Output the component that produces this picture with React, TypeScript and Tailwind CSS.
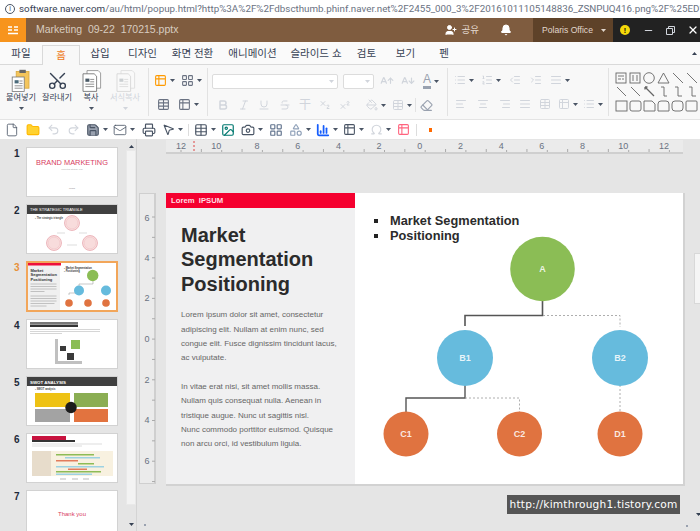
import React from 'react';
import {
  AArrowDown,
  AArrowUp,
  AlignCenter,
  AlignJustify,
  AlignLeft,
  AlignRight,
  BarChart3,
  Bell,
  Bold,
  Camera,
  Eraser,
  File,
  Folder,
  Image,
  IndentDecrease,
  IndentIncrease,
  Italic,
  LayoutGrid,
  List,
  ListOrdered,
  Mail,
  Minus,
  MousePointer2,
  Omega,
  PaintBucket,
  Printer,
  Redo2,
  Save,
  Scissors,
  Shapes,
  Strikethrough,
  Subscript,
  Superscript,
  Table,
  Table2,
  Underline,
  Undo2,
  UserPlus,
  X,
} from 'lucide-react';

const Caret = ({ className = 'text-gray-600' }: { className?: string }) => (
  <svg width="5" height="3" viewBox="0 0 5 3" className={className}>
    <path d="M0 0h5L2.5 3z" fill="currentColor" />
  </svg>
);

const Slot = ({ className, caret, children }: { className: string; caret?: boolean; children?: React.ReactNode }) => (
  <div className={`flex shrink-0 items-center justify-center gap-[3px] ${className}`}>
    {children}
    {caret && <Caret />}
  </div>
);

const tabs = [
  { label: '파일', w: 'w-[42px]' },
  { label: '홈', w: 'w-[38px]', active: true },
  { label: '삽입', w: 'w-[40px]' },
  { label: '디자인', w: 'w-[45px]' },
  { label: '화면 전환', w: 'w-[55px]' },
  { label: '애니메이션', w: 'w-[65px]' },
  { label: '슬라이드 쇼', w: 'w-[62px]' },
  { label: '검토', w: 'w-[39px]' },
  { label: '보기', w: 'w-[39px]' },
  { label: '펜', w: 'w-[38px]' },
];

const PasteIcon = () => (
  <svg width="24" height="24" viewBox="0 0 30 30">
    <rect x="9" y="3" width="16" height="21" fill="#f4c55c" stroke="#d9a93c" />
    <rect x="13" y="1" width="8" height="4" fill="#666" />
    <rect x="4" y="10" width="15" height="18" fill="#fff" stroke="#777" />
    <rect x="7" y="14" width="5" height="4" fill="#4a6a7a" />
    <path d="M13 15h4M13 18h4M7 21h10M7 24h10" stroke="#777" />
  </svg>
);

const CopyIcon = ({ faded }: { faded?: boolean }) => (
  <svg width="24" height="24" viewBox="0 0 30 30" className={faded ? 'opacity-25' : ''}>
    <path d="M10 2h14l3 3v19H10z" fill="#fff" stroke="#888" />
    <path d="M5 6h14l3 3v19H5z" fill="#fff" stroke="#666" />
    <rect x="8" y="12" width="5" height="4" fill="#4a5a66" />
    <path d="M14 13h5M14 16h5M8 19h11M8 22h11" stroke="#777" />
  </svg>
);

const BigTool = ({ label, faded, className, children }: { label: string; faded?: boolean; className: string; children: React.ReactNode }) => (
  <div className={`flex shrink-0 flex-col items-center ${className}`}>
    <div className="flex h-[23px] items-center justify-center">{children}</div>
    <span className={`whitespace-nowrap text-[8.2px] leading-[12px] ${faded ? 'text-gray-300' : 'text-gray-700'}`}>{label}</span>
    <div className="mt-[2px] flex h-[5px] items-center">{label !== '잘라내기' && <Caret className={faded ? 'text-gray-300' : 'text-gray-600'} />}</div>
  </div>
);

const ShapesGrid = () => (
  <svg width="84" height="42" viewBox="0 0 84 42" fill="none" stroke="#666" strokeWidth="0.9">
    <rect x="1" y="2" width="10" height="10" />
    <path d="M3 5h6M3 8h3M7 8h2" />
    <rect x="15" y="2" width="10" height="10" />
    <path d="M18 4v6M22 4v6" />
    <circle cx="34" cy="7" r="5.3" />
    <path d="M43 12l5.5-10L54 12z" />
    <path d="M58 2l10 10M72 2l10 10" />
    <path d="M2 16l9 9M16 16l9 9" />
    <path d="M30 16l9 9M30 16l2.5 0M30 16l0 2.5" strokeWidth="1.3" />
    <path d="M46 16h3v9h3M60 16h3v9h4M74 16h3v9h4" />
    <rect x="1" y="30" width="11" height="10" />
    <rect x="15" y="30" width="11" height="10" rx="2" />
    <path d="M29 30h8l3 3v7H29z" />
    <path d="M43 33q0-3 3-3h5q3 0 3 3v7H43z" />
    <rect x="57" y="30" width="11" height="10" rx="3" />
    <rect x="71" y="30" width="11" height="10" rx="1" />
  </svg>
);

const RibbonBar = () => {
  const g = 'text-gray-300';
  return (
    <div className="flex h-[55px] items-start border-b border-[#e4e4e4] bg-[#f8f8f8]">
      <div className="flex w-[148px] shrink-0 gap-0 pl-[3px] pt-[4px]">
        <BigTool label="붙여넣기" className="w-[36px]"><PasteIcon /></BigTool>
        <BigTool label="잘라내기" className="w-[36px]"><Scissors size={21} strokeWidth={1.6} className="-rotate-90 text-gray-700" /></BigTool>
        <BigTool label="복사" className="w-[32px]"><CopyIcon /></BigTool>
        <BigTool label="서식복사" faded className="w-[36px]"><CopyIcon faded /></BigTool>
      </div>
      <div className="mt-[3px] h-[48px] w-px shrink-0 bg-[#e2e2e2]" />
      <div className="flex w-[58px] shrink-0 flex-col gap-[11px] pl-[2px] pt-[9px] text-gray-500">
        <div className="flex">
          <Slot className="w-[27px]" caret><Table2 size={13} className="text-amber-500" /></Slot>
          <Slot className="w-[27px]" caret><LayoutGrid size={13} /></Slot>
        </div>
        <div className="flex">
          <Slot className="w-[24px]"><Table size={13} /></Slot>
          <Slot className="w-[27px]" caret><Table2 size={13} /></Slot>
        </div>
      </div>
      <div className="mt-[3px] h-[48px] w-px shrink-0 bg-[#e2e2e2]" />
      <div className="flex w-[239px] shrink-0 flex-col gap-[9px] pl-[4px] pt-[8px]">
        <div className="flex items-center">
          <div className="flex h-[15px] w-[126px] items-center justify-end rounded-[2px] border border-[#dcdcdc] bg-white pr-[3px]"><Caret className="text-gray-300" /></div>
          <div className="ml-[5px] flex h-[15px] w-[31px] items-center justify-end rounded-[2px] border border-[#dcdcdc] bg-white pr-[3px]"><Caret className="text-gray-300" /></div>
          <Slot className="ml-[2px] w-[22px]"><AArrowUp size={14} className={g} /></Slot>
          <Slot className="w-[20px]"><AArrowDown size={14} className={g} /></Slot>
          <Slot className="w-[26px]" caret><span className="border-b-[3px] border-gray-400 text-[12px] leading-[13px] text-gray-400">A</span></Slot>
        </div>
        <div className="flex items-center">
          <Slot className="w-[21px]"><Bold size={12} className={g} strokeWidth={3} /></Slot>
          <Slot className="w-[21px]"><Italic size={12} className={g} /></Slot>
          <Slot className="w-[20px]"><Underline size={12} className={g} /></Slot>
          <Slot className="w-[21px]"><Strikethrough size={12} className={g} /></Slot>
          <Slot className="w-[20px]"><span className={`text-[12px] leading-[12px] ${g}`}>干</span></Slot>
          <Slot className="w-[20px]"><Subscript size={12} className={g} /></Slot>
          <Slot className="w-[20px]"><Superscript size={12} className={g} /></Slot>
          <Slot className="ml-[8px] w-[26px]" caret><PaintBucket size={12} className={g} /></Slot>
          <Slot className="w-[26px]" caret><Table size={12} className={g} /></Slot>
          <div className="h-[14px] w-px bg-[#e2e2e2]" />
          <Slot className="w-[20px]"><Eraser size={13} className="text-gray-400" /></Slot>
        </div>
      </div>
      <div className="mt-[3px] h-[48px] w-px shrink-0 bg-[#e2e2e2]" />
      <div className="flex w-[160px] shrink-0 flex-col gap-[12px] pl-[2px] pt-[9px] text-gray-300">
        <div className="flex">
          <Slot className="w-[27px]" caret><List size={12} /></Slot>
          <Slot className="w-[27px]" caret><ListOrdered size={12} /></Slot>
          <Slot className="w-[22px]"><IndentDecrease size={12} /></Slot>
          <Slot className="w-[20px]"><IndentIncrease size={12} /></Slot>
          <Slot className="w-[28px]" caret><AlignJustify size={12} /></Slot>
        </div>
        <div className="flex">
          <Slot className="w-[21px]"><AlignLeft size={12} /></Slot>
          <Slot className="w-[23px]"><AlignCenter size={12} /></Slot>
          <Slot className="w-[21px]"><AlignRight size={12} /></Slot>
          <Slot className="w-[20px]"><AlignJustify size={12} /></Slot>
          <Slot className="w-[20px]"><Table size={12} /></Slot>
          <Slot className="w-[25px]" caret><Table2 size={12} /></Slot>
          <Slot className="w-[25px]" caret><List size={12} /></Slot>
        </div>
      </div>
      <div className="mt-[3px] h-[48px] w-px shrink-0 bg-[#e2e2e2]" />
      <div className="ml-[6px] mt-[6px] shrink-0"><ShapesGrid /></div>
    </div>
  );
};

const QuickBar = () => (
  <div className="flex h-[19px] items-center bg-white pl-[2px] text-gray-600">
    <Slot className="w-[20px]"><File size={14} strokeWidth={1.4} /></Slot>
    <Slot className="w-[21px]"><Folder size={14} className="fill-amber-300 text-amber-400" /></Slot>
    <Slot className="w-[21px]"><Undo2 size={13} className="text-gray-300" /></Slot>
    <Slot className="w-[19px]"><Redo2 size={13} className="text-gray-300" /></Slot>
    <Slot className="w-[27px]" caret><Save size={14} className="fill-gray-400" /></Slot>
    <Slot className="w-[28px]" caret><Mail size={14} strokeWidth={1.4} /></Slot>
    <Slot className="w-[21px]"><Printer size={14} /></Slot>
    <Slot className="w-[27px]" caret><MousePointer2 size={13} /></Slot>
    <div className="mx-[2px] h-[12px] w-px bg-[#ddd]" />
    <Slot className="w-[27px]" caret><Table size={14} /></Slot>
    <Slot className="w-[20px]"><Image size={14} className="text-teal-700" /></Slot>
    <Slot className="w-[27px]" caret><Camera size={14} /></Slot>
    <Slot className="w-[21px]"><LayoutGrid size={14} className="text-slate-500" /></Slot>
    <Slot className="w-[27px]" caret><Shapes size={14} className="text-slate-400" /></Slot>
    <Slot className="w-[27px]" caret><BarChart3 size={14} strokeWidth={3} className="text-blue-600" /></Slot>
    <Slot className="w-[26px]" caret><Table2 size={13} /></Slot>
    <Slot className="w-[28px]" caret><Omega size={13} className="text-gray-300" /></Slot>
    <Slot className="w-[19px]"><Table2 size={13} className="text-rose-400" /></Slot>
    <div className="mx-[3px] h-[12px] w-px bg-[#ddd]" />
    <Slot className="w-[20px]"><span className="h-[4px] w-[3px] bg-orange-500" /></Slot>
  </div>
);

const thumbHead = 'h-[48px] w-[90px] bg-white';

const Thumb1 = () => (
  <svg viewBox="0 0 90 48" className={thumbHead}>
    <text x="45" y="16.5" textAnchor="middle" fontSize="7.4" fill="#d8405f" fontFamily="Liberation Sans">BRAND MARKETING</text>
    <text x="45" y="21.5" textAnchor="middle" fontSize="2" fill="#aaa" fontFamily="Liberation Sans">Marketing Strategy Plan</text>
    <text x="45" y="41" textAnchor="middle" fontSize="2" fill="#888" fontFamily="Liberation Sans">Polaris</text>
  </svg>
);

const Thumb2 = () => (
  <svg viewBox="0 0 90 48" className={thumbHead}>
    <rect width="90" height="9" fill="#404040" />
    <text x="3" y="6.2" fontSize="4" fill="#fff" fontFamily="Liberation Sans">THE STRATEGIC TRIANGLE</text>
    <text x="8" y="14" fontSize="2.6" fontWeight="bold" fill="#444" fontFamily="Liberation Sans">▪ The strategic triangle</text>
    {[[45, 18], [27, 38], [63, 38]].map(([cx, cy]) => (
      <g key={cx}>
        <circle cx={cx} cy={cy} r="7.5" fill="#f8dcdc" stroke="#e3929c" strokeWidth="0.6" />
        <circle cx={cx} cy={cy} r="5.8" fill="none" stroke="#eab0b6" strokeWidth="0.3" />
      </g>
    ))}
    <path d="M30 28h8M52 28h8M40 40h10" stroke="#bbb" strokeWidth="0.5" />
  </svg>
);

const Thumb3 = () => (
  <svg viewBox="0 0 90 49" className="h-[49px] w-[90px] bg-white outline-2 -outline-offset-1 outline-[#f2a65a]">
    <rect width="33" height="49" fill="#f0f0f0" />
    <rect width="34" height="3.5" fill="#ee0f3a" />
    <g fontSize="4" fontWeight="bold" fill="#333" fontFamily="Liberation Sans">
      <text x="3.5" y="9.5">Market</text>
      <text x="3.5" y="14">Segmentation</text>
      <text x="3.5" y="18.5">Positioning</text>
    </g>
    <path d="M3.5 22h26M3.5 24.5h26M3.5 27h26M3.5 29.5h14M3.5 34h26M3.5 36.5h26M3.5 39h26M3.5 41.5h24M3.5 44h16" stroke="#bbb" strokeWidth="0.9" />
    <g fontSize="2.6" fontWeight="bold" fill="#333" fontFamily="Liberation Sans">
      <text x="37" y="6.5">▪ Market Segmentation</text>
      <text x="37" y="9.5">▪ Positioning</text>
    </g>
    <path d="M66 18v4H52v2M42 33v-2h10" stroke="#777" strokeWidth="0.4" fill="none" />
    <circle cx="65.7" cy="13.5" r="5.7" fill="#8bbd55" />
    <circle cx="52" cy="28.5" r="5" fill="#66bbdd" />
    <circle cx="79" cy="28.5" r="5" fill="#66bbdd" />
    <circle cx="42" cy="41" r="3.8" fill="#e07340" />
    <circle cx="61" cy="41" r="3.8" fill="#e07340" />
    <circle cx="79" cy="41" r="3.8" fill="#e07340" />
  </svg>
);

const Thumb4 = () => (
  <svg viewBox="0 0 90 48" className={thumbHead}>
    <rect x="3" y="2" width="48" height="2" fill="#777" />
    <rect x="3" y="4.5" width="48" height="2.5" fill="#333" />
    <path d="M3 9.5h70M3 11.5h70M3 13.5h32" stroke="#bbb" strokeWidth="0.6" />
    <path d="M28 19h3v22h24v3H28z" fill="#c0c0c0" />
    <rect x="44" y="20" width="9" height="9" fill="#8bbd55" />
    <rect x="33" y="26" width="6" height="5" fill="#3a3a3a" />
    <rect x="40" y="33" width="7" height="7" fill="#3a3a3a" />
  </svg>
);

const Thumb5 = () => (
  <svg viewBox="0 0 90 48" className={thumbHead}>
    <rect width="90" height="9" fill="#404040" />
    <text x="3" y="6.5" fontSize="4.4" fontWeight="bold" fill="#fff" fontFamily="Liberation Sans">SWOT ANALYSIS</text>
    <text x="8" y="13" fontSize="2.6" fontWeight="bold" fill="#444" fontFamily="Liberation Sans">▪ SWOT analysis</text>
    <rect x="8" y="16" width="35" height="14" fill="#eec214" />
    <rect x="47" y="16" width="34" height="14" fill="#8bae53" />
    <rect x="8" y="32" width="35" height="13" fill="#a3a3a3" />
    <rect x="47" y="32" width="34" height="13" fill="#e2733f" />
    <circle cx="44" cy="30.5" r="5.7" fill="#1c1c1c" />
  </svg>
);

const Thumb6 = () => (
  <svg viewBox="0 0 90 48" className={thumbHead}>
    <rect x="5" y="2" width="34" height="4" fill="#c8133f" />
    <rect x="5" y="6" width="43" height="2" fill="#333" />
    <path d="M5 10h70M5 12h50" stroke="#bbb" strokeWidth="0.5" />
    <rect x="5" y="17" width="81" height="25" fill="#f8f1e0" />
    <rect x="5" y="17" width="19" height="25" fill="#e7dccb" />
    <rect x="29" y="20" width="38" height="1.5" fill="#8ebc56" />
    <rect x="38" y="23" width="35" height="1.5" fill="#9dd2e2" />
    <rect x="29" y="26" width="22" height="1.5" fill="#e27c5c" />
    <rect x="51" y="29" width="16" height="1.5" fill="#8ebc56" />
    <rect x="29" y="32" width="48" height="1.5" fill="#9dd2e2" />
    <rect x="41" y="34.5" width="19" height="1.5" fill="#e27c5c" />
    <rect x="29" y="37" width="45" height="1.5" fill="#8ebc56" />
    <rect x="29" y="39.5" width="36" height="1.5" fill="#9dd2e2" />
    <path d="M33 45h6M45 45h6M56 45h6" stroke="#aaa" strokeWidth="0.8" />
  </svg>
);

const Thumb7 = () => (
  <svg viewBox="0 0 90 48" className={thumbHead}>
    <text x="45" y="25" textAnchor="middle" fontSize="6" fill="#d8405f" fontFamily="Liberation Sans">Thank you</text>
  </svg>
);

const thumbs = [Thumb1, Thumb2, Thumb3, Thumb4, Thumb5, Thumb6, Thumb7];

const SlidePanel = () => (
  <div className="flex w-[137px] shrink-0 border-r border-[#d4d4d4]">
    <div className="flex w-[122px] shrink-0 flex-col gap-[9px] pl-[14px] pt-[9px]">
      {thumbs.map((T, i) => (
        <div key={i} className="flex shrink-0 items-start">
          <span className={`w-[13px] text-[10px] font-bold leading-[12px] ${i === 2 ? 'text-[#e8913a]' : 'text-gray-800'}`}>{i + 1}</span>
          <div className={i === 2 ? '' : 'shadow-[0_0_0_1px_#d2d2d2]'}><T /></div>
        </div>
      ))}
    </div>
    <div className="ml-[5px] flex w-[8px] shrink-0 flex-col items-center pt-[6px]">
      <Caret className="rotate-180 text-gray-700" />
      <div className="mt-[3px] h-[353px] w-[8px] bg-[#f3f3f3] shadow-[0_0_0_1px_#e9e9e9]" />
      <Caret className="mt-[19px] text-gray-700" />
    </div>
  </div>
);

const hNums = [12, 10, 8, 6, 4, 2, 0, 2, 4, 6, 8, 10, 12];
const vNums = [6, 4, 2, 0, 2, 4, 6];

const HRuler = () => (
  <div className="relative ml-[29px] mt-[1px] flex h-[14px] w-[517px] overflow-hidden border-b-2 border-[#cfcfcf] bg-[#ebebeb] pt-[1px] text-[9px] leading-[11px] text-gray-500">
    {hNums.map((n, i) => (
      <span key={i} className={`shrink-0 text-center ${i === 0 ? 'w-[30px]' : 'w-[40.7px]'}`}>{n}</span>
    ))}
    <svg className="absolute left-0 top-0" width="517" height="14">
      <path d="M28 1v12" stroke="#d44" strokeDasharray="2 2" />
      {Array.from({ length: 26 }, (_, i) => (
        <path key={i} d={`M${15 + i * 20.35} ${i % 2 ? 9 : 10}v3`} stroke="#aaa" />
      ))}
    </svg>
  </div>
);

const VRuler = () => (
  <div className="relative flex h-[291px] w-[17px] shrink-0 flex-col items-center border border-r-2 border-[#cfcfcf] bg-[#ebebeb] text-[9px] text-gray-500">
    {vNums.map((n, i) => (
      <span key={i} className={`flex shrink-0 items-center ${i === 0 ? 'h-[44px] pt-[5px]' : 'h-[40.7px]'}`}>{n}</span>
    ))}
    <svg className="absolute left-0 top-0" width="15" height="289">
      {Array.from({ length: 14 }, (_, i) => (
        <path key={i} d={`M12 ${23 + i * 20.35}h3`} stroke="#aaa" />
      ))}
    </svg>
  </div>
);

const Node = ({ cx, cy, r, fill, label, size }: { cx: number; cy: number; r: number; fill: string; label: string; size: number }) => (
  <g>
    <circle cx={cx} cy={cy} r={r} fill={fill} />
    <text x={cx} y={cy + 3} textAnchor="middle" fontSize={size} fontWeight="bold" fill="#fff" fillOpacity="0.85" fontFamily="Liberation Sans">{label}</text>
  </g>
);

const Diagram = () => (
  <svg className="absolute left-0 top-0" width="327" height="290" viewBox="0 0 327 290" fill="none">
    <path d="M187.5 108v14.5H110V133" stroke="#555" strokeWidth="1.6" />
    <path d="M188 122.5h77V134" stroke="#999" strokeWidth="0.8" strokeDasharray="2 2" />
    <path d="M110 192v13H51v14" stroke="#555" strokeWidth="1.4" />
    <path d="M110 205h54.5v14M265 192v27" stroke="#999" strokeWidth="0.8" strokeDasharray="2 2" />
    <Node cx={187.5} cy={76} r={32.3} fill="#8bbd55" label="A" size={9} />
    <Node cx={110} cy={165} r={28} fill="#66bbdd" label="B1" size={9} />
    <Node cx={265} cy={165} r={28} fill="#66bbdd" label="B2" size={9} />
    <Node cx={51} cy={241} r={22.5} fill="#e07340" label="C1" size={9} />
    <Node cx={164.5} cy={241} r={22.5} fill="#e07340" label="C2" size={9} />
    <Node cx={265} cy={241} r={22.5} fill="#e07340" label="D1" size={9} />
  </svg>
);

const Slide = () => (
  <div className="ml-[10px] flex h-[291px] w-[517px] shrink-0 bg-white shadow-[1px_1px_0_1px_#d2d2d2]">
    <div className="w-[189px] shrink-0 bg-[#f0f0f1]">
      <div className="h-[15px] bg-[#f5002f] pl-[5px] text-[7.7px] font-bold leading-[16px] text-[#ffdfe4]">Lorem&nbsp; IPSUM</div>
      <h1 className="mt-[15px] pl-[15px] text-[20px] font-bold leading-[24.4px] text-[#2b2b2b]">
        Market<br />Segmentation<br />Positioning
      </h1>
      <p className="mt-[12px] whitespace-nowrap pl-[15px] text-[8px] leading-[14.4px] text-[#666]">
        Lorem ipsum dolor sit amet, consectetur<br />
        adipiscing elit. Nullam at enim nunc, sed<br />
        congue elit. Fusce dignissim tincidunt lacus,<br />
        ac vulputate.
      </p>
      <p className="mt-[14px] whitespace-nowrap pl-[15px] text-[8px] leading-[14.4px] text-[#666]">
        In vitae erat nisi, sit amet mollis massa.<br />
        Nullam quis consequat nulla. Aenean in<br />
        tristique augue. Nunc ut sagittis nisl.<br />
        Nunc commodo porttitor euismod. Quisque<br />
        non arcu orci, id vestibulum ligula.
      </p>
    </div>
    <div className="relative flex-1">
      <ul className="pl-[19px] pt-[20px] text-[12.8px] font-bold leading-[15px] text-[#2b2b2b]">
        <li className="flex items-center gap-[12px]"><span className="h-[4px] w-[4px] bg-[#222]" />Market Segmentation</li>
        <li className="flex items-center gap-[12px]"><span className="h-[4px] w-[4px] bg-[#222]" />Positioning</li>
      </ul>
      <Diagram />
    </div>
  </div>
);

const App: React.FC = () => {
  return (
    <div className="relative flex h-[531px] w-[700px] flex-col overflow-hidden bg-[#e5e5e5] font-['Liberation_Sans','Noto_Sans_CJK_KR',sans-serif]">
      {/* address bar */}
      <div className="flex h-[18px] items-center gap-[4px] overflow-hidden whitespace-nowrap bg-white pl-[5px] font-['Roboto','Noto_Sans',sans-serif] text-[9.8px] text-gray-500">
        <span className="flex h-[10px] w-[10px] shrink-0 items-center justify-center rounded-full border border-gray-600 text-[7px] leading-none text-gray-600">i</span>
        <span><span className="text-gray-700">software.naver.com</span>/au/html/popup.html?http%3A%2F%2Fdbscthumb.phinf.naver.net%2F2455_000_3%2F20161011105148836_ZSNPUQ416.png%2F%25ED%</span>
      </div>

      {/* title bar */}
      <div className="flex h-[24px] items-center bg-[#7f5c3f]">
        <div className="flex h-full w-[26px] items-center justify-center bg-[#f7941d]">
          <svg width="12" height="10" viewBox="0 0 12 10" fill="none" stroke="#fff" strokeWidth="1.4">
            <path d="M1 2h4M1 5h4M7 2h4M7 5h4M1 8.5h10" />
          </svg>
        </div>
        <span className="ml-[10px] text-[10.5px] text-[#d8ccc0]">Marketing&nbsp; 09-22&nbsp; 170215.pptx</span>
        <div className="ml-auto flex h-full items-center">
          <UserPlus size={12} className="fill-white text-white" />
          <span className="ml-[5px] text-[9.5px] text-[#e8dfd6]">공유</span>
          <Bell size={12} className="ml-[21px] mr-[21px] fill-white text-white" />
          <div className="flex h-full w-[80px] items-center gap-[8px] bg-[#5e4229] pl-[9px] text-[8.6px] text-[#e0d6cc]">
            Polaris Office <Caret className="text-[#e0d6cc]" />
          </div>
          <div className="flex h-full w-[87px] items-center bg-[#222] pl-[7px] text-gray-300">
            <span className="flex h-[10px] w-[10px] items-center justify-center rounded-full bg-[#f5d90a] text-[7px] font-bold leading-none text-black">!</span>
            <Minus size={11} className="ml-[13px]" strokeWidth={2.5} />
            <svg width="9" height="9" viewBox="0 0 9 9" fill="none" stroke="currentColor" className="ml-[12px]">
              <path d="M.5 2.5h6v6h-6zM2.5 2.5v-2h6v6h-2" />
            </svg>
            <X size={12} className="ml-[12px] text-white" strokeWidth={2.5} />
          </div>
        </div>
      </div>

      {/* ribbon tabs */}
      <div className="relative flex h-[23px] items-end border-b border-[#d9d9d9] bg-[#fafafa] text-[10.5px] text-gray-700">
        {tabs.map(t => (
          <div
            key={t.label}
            className={`flex h-[20px] shrink-0 items-center justify-center whitespace-nowrap ${t.w} ${t.active ? '-mb-px border border-b-0 border-[#d9d9d9] bg-[#f8f8f8] text-[#ee7b22]' : ''}`}
          >
            {t.label}
          </div>
        ))}
        <Caret className="absolute right-[3px] top-[10px] rotate-180 text-gray-700" />
      </div>

      <RibbonBar />
      <QuickBar />

      {/* work area */}
      <div className="flex min-h-0 flex-1">
        <SlidePanel />
        <div className="min-w-0 flex-1">
          <HRuler />
          <div className="mt-[39px] flex pl-[2px]">
            <VRuler />
            <Slide />
          </div>
        </div>
      </div>

      {/* things lying over the canvas */}
      <div className="absolute left-[694px] top-[253px] h-[51px] w-[6px] border border-r-0 border-[#d8d8d8] bg-[#f5f5f5]" />
      <div className="absolute left-[507px] top-[495px] flex h-[19px] w-[173px] items-center justify-center whitespace-nowrap bg-[#555] font-['DejaVu_Sans',sans-serif] text-[10.6px] tracking-[0.2px] text-white">http://kimthrough1.tistory.com</div>
      <Caret className="absolute left-[696px] top-[513px] text-gray-700" />
      <span className="absolute left-[144px] top-[524px] h-[2px] w-[2px] bg-gray-400" />
      <span className="absolute left-[686px] top-[525px] h-[2px] w-[2px] bg-gray-400" />
    </div>
  );
};

export default App;
